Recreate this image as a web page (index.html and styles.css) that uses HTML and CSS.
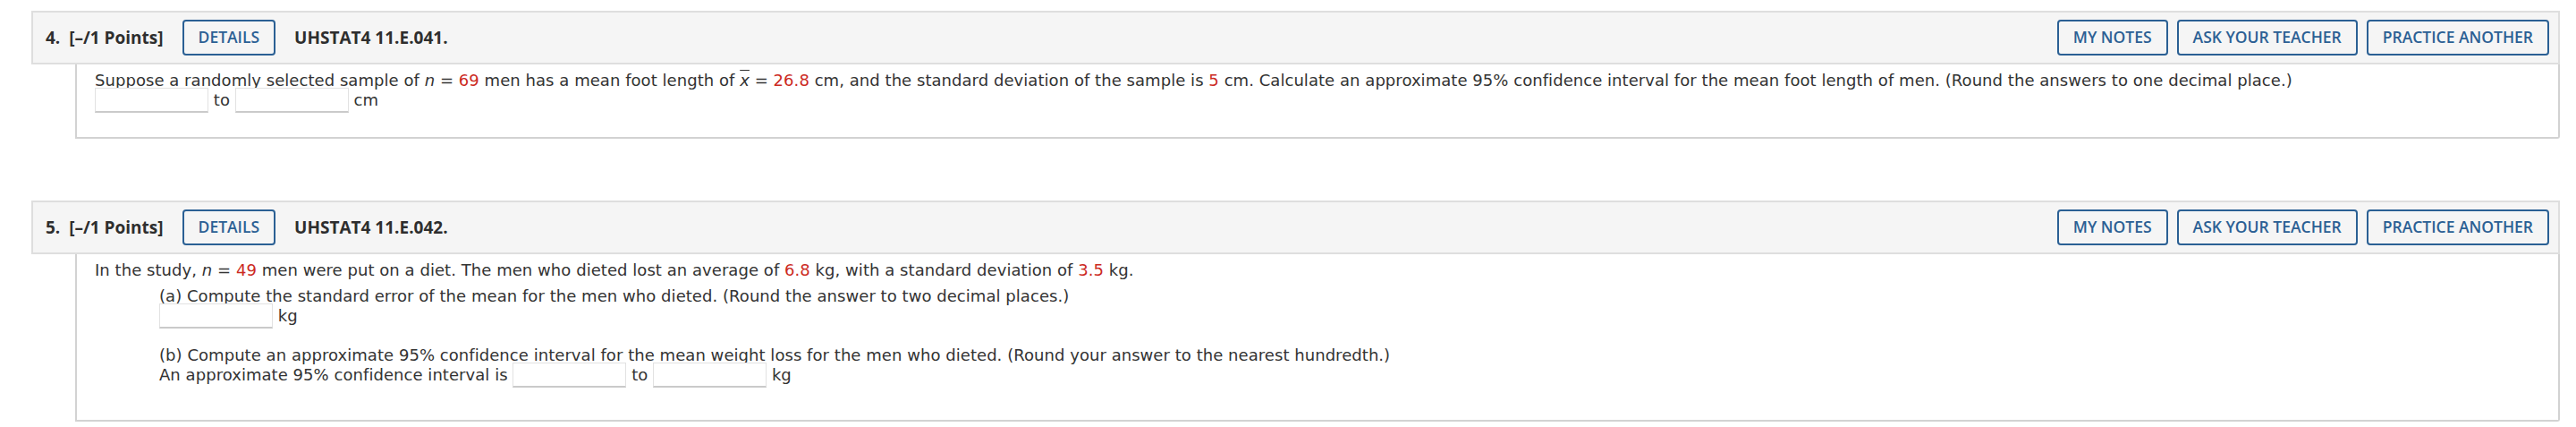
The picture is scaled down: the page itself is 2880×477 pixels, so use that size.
FILE: index.html
```html
<!DOCTYPE html>
<html lang="en">
<head>
<meta charset="utf-8">
<title>Questions</title>
<link rel="stylesheet" href="styles.css">
</head>
<body>
<div class="page">
  <div class="q q1">
    <div class="q-head">
      <span class="q-num">4.&nbsp; [–/1 Points]</span>
      <button class="btn">DETAILS</button>
      <span class="q-code">UHSTAT4 11.E.041.</span>
      <div class="q-actions">
        <button class="btn">MY NOTES</button>
        <button class="btn">ASK YOUR TEACHER</button>
        <button class="btn">PRACTICE ANOTHER</button>
      </div>
    </div>
    <div class="q-body body1">
      <div class="line">Suppose a randomly selected sample of <i>n</i> = <span class="red">69</span> men has a mean foot length of <i class="xbar">x</i> = <span class="red">26.8</span> cm, and the standard deviation of the sample is <span class="red">5</span> cm. Calculate an approximate 95% confidence interval for the mean foot length of men. (Round the answers to one decimal place.)</div>
      <div class="line"><input class="ans" type="text"> to <input class="ans" type="text"> cm</div>
    </div>
  </div>

  <div class="q q2">
    <div class="q-head">
      <span class="q-num">5.&nbsp; [–/1 Points]</span>
      <button class="btn">DETAILS</button>
      <span class="q-code">UHSTAT4 11.E.042.</span>
      <div class="q-actions">
        <button class="btn">MY NOTES</button>
        <button class="btn">ASK YOUR TEACHER</button>
        <button class="btn">PRACTICE ANOTHER</button>
      </div>
    </div>
    <div class="q-body body2">
      <div class="line">In the study, <i>n</i> = <span class="red">49</span> men were put on a diet. The men who dieted lost an average of <span class="red">6.8</span> kg, with a standard deviation of <span class="red">3.5</span> kg.</div>
      <div class="part">
        <div class="line">(a) Compute the standard error of the mean for the men who dieted. (Round the answer to two decimal places.)</div>
        <div class="line"><input class="ans" type="text"> kg</div>
        <div class="line">&nbsp;</div>
        <div class="line">(b) Compute an approximate 95% confidence interval for the mean weight loss for the men who dieted. (Round your answer to the nearest hundredth.)</div>
        <div class="line">An approximate 95% confidence interval is <input class="ans" type="text"> to <input class="ans" type="text"> kg</div>
      </div>
    </div>
  </div>
</div>
</body>
</html>
```

FILE: styles.css
```css
* { box-sizing: border-box; }

html, body {
  margin: 0;
  padding: 0;
  background: #ffffff;
}

.page {
  padding: 12px 18px 0 35px;
}

.q2 {
  margin-top: 69px;
}

.q-head {
  display: flex;
  align-items: center;
  height: 60px;
  padding: 0 10px 0 14px;
  background: #f5f5f5;
  border: 2px solid #dedede;
  font-family: "Open Sans", "Liberation Sans", sans-serif;
  color: #2e2e2e;
}

.q-num,
.q-code {
  font-weight: 700;
  font-size: 19px;
  white-space: pre;
}

.q-num {
  margin-right: 21px;
}

.q-code {
  margin-left: 21px;
}

.btn {
  height: 40px;
  padding: 0 16px;
  background: transparent;
  border: 2px solid #2b6094;
  border-radius: 4px;
  color: #2b6094;
  font-family: "Open Sans", "Liberation Sans", sans-serif;
  font-weight: 600;
  font-size: 17.5px;
  line-height: 1;
}

.q-actions {
  margin-left: auto;
  display: flex;
  gap: 10px;
}

.q-body {
  margin-left: 49px;
  border: 2px solid #d2d2d2;
  border-top: none;
  border-radius: 0 0 3px 0;
  padding: 7px 20px 30px 20px;
  font-family: "DejaVu Sans", Verdana, sans-serif;
  font-size: 18px;
  line-height: 22px;
  letter-spacing: 0.05px;
  color: #333333;
}

.body2 {
  padding-bottom: 39px;
}

.line {
  height: 22px;
  white-space: nowrap;
}

.part {
  margin-top: 7px;
  margin-left: 72px;
}

.red {
  color: #cc2a1f;
}

.xbar {
  text-decoration: overline;
}

.ans {
  display: inline-block;
  vertical-align: top;
  width: 127px;
  height: 28px;
  margin: -3px 0 -3px 0;
  padding: 0;
  background: #ffffff;
  border: 1px solid #e2e2e2;
  border-bottom: 2px solid #cacaca;
  border-radius: 0;
}
```
